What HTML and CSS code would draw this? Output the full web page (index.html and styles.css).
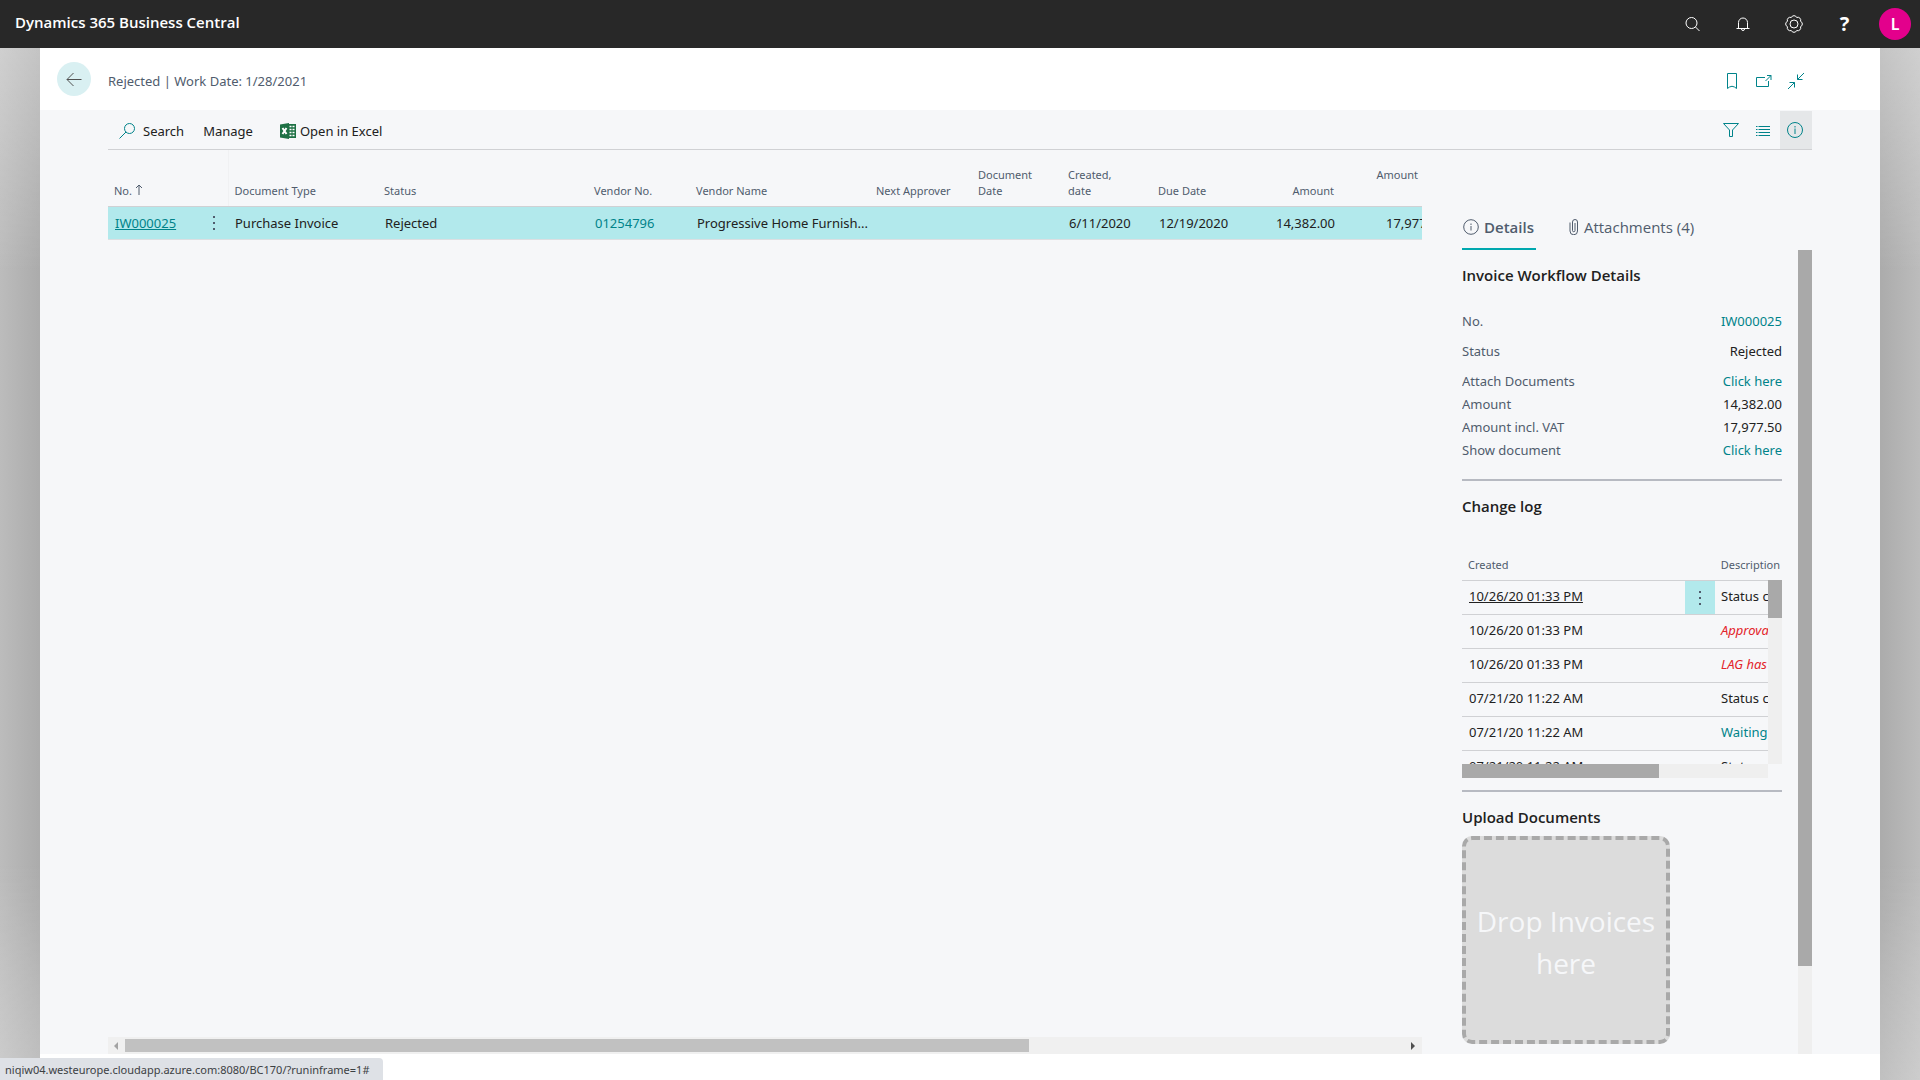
FILE: index.html
```html
<!DOCTYPE html>
<html lang="en">
<head>
  <meta charset="UTF-8">
  <meta name="viewport" content="width=device-width, initial-scale=1.0">
  <title>Rejected - Dynamics 365 Business Central</title>
  <link rel="stylesheet" href="styles.css">
</head>
<body>

  <!-- Top bar -->
  <header class="topbar">
    <a href="#" class="brand">Dynamics 365 Business Central</a>
    <nav class="topbar-icons">
      <button type="button" aria-label="Search">
        <svg width="16" height="16" viewBox="0 0 16 16"><circle cx="7.500" cy="7" r="5.500"/><path d="M11.500 11L15.500 15"/></svg>
      </button>
      <button type="button" aria-label="Notifications">
        <svg width="16" height="16" viewBox="0 0 16 16"><path d="M3.500 12.500V6.500a4.500 4.500 0 0 1 9 0V12.500M1.500 12.500H14.500M6.500 13a1.500 1.500 0 0 0 3 0"/></svg>
      </button>
      <button type="button" aria-label="Settings">
        <svg width="18" height="18" viewBox="0 0 18 18"><circle cx="9" cy="9" r="4"/><path d="M15.500 11.700A2.900 2.900 0 0 1 11.700 15.500A2.900 2.900 0 0 1 6.300 15.500A2.900 2.900 0 0 1 2.500 11.700A2.900 2.900 0 0 1 2.500 6.300A2.900 2.900 0 0 1 6.300 2.500A2.900 2.900 0 0 1 11.700 2.500A2.900 2.900 0 0 1 15.500 6.300A2.900 2.900 0 0 1 15.500 11.700Z"/></svg>
      </button>
      <button type="button" class="help" aria-label="Help">?</button>
      <button type="button" class="avatar">L</button>
    </nav>
  </header>

  <div class="page">

    <!-- Page title -->
    <div class="page-head">
      <button type="button" class="back" aria-label="Back">
        <svg width="16" height="16" viewBox="0 0 16 16"><path d="M15.500 8.500H1M7.500 2L1 8.500L7.500 15"/></svg>
      </button>
      <h1 class="page-title">Rejected | Work Date: 1/28/2021</h1>
      <div class="page-icons">
        <button type="button" aria-label="Bookmark">
          <svg width="18" height="18" viewBox="0 0 18 18"><path d="M4.500 1.500H13.500V16.500L11.500 15Q9 13.500 6.500 15L4.500 16.500Z"/></svg>
        </button>
        <button type="button" aria-label="Open in new window">
          <svg width="18" height="18" viewBox="0 0 18 18"><path d="M10 5.500H1.500V14.500H13.500V9M10.500 9L16 3.500M12 3.500H16V8"/></svg>
        </button>
        <button type="button" aria-label="Collapse">
          <svg width="18" height="18" viewBox="0 0 18 18"><path d="M17 1L10.500 7.500M10.500 2.500V7.500H15.500M1 17L7.500 10.500M2.500 10.500H7.500V15.500"/></svg>
        </button>
      </div>
    </div>

    <div class="content">

      <!-- Action bar -->
      <div class="toolbar">
        <button type="button" class="action action-search">
          <svg width="18" height="18" viewBox="0 0 18 18"><circle cx="11.500" cy="6.500" r="5"/><path d="M8 10L1.500 16.500"/></svg>
          Search
        </button>
        <button type="button" class="action action-manage">Manage</button>
        <button type="button" class="action action-excel">
          <svg class="excel" width="16" height="16" viewBox="0 0 16 16">
            <path d="M0 1.500L9 0V16L0 14.500Z"/>
            <path d="M9 1H16V15H9Z"/>
            <path class="cells" d="M9.500 3.500h2M12.500 3.500h2M9.500 6.500h2M12.500 6.500h2M9.500 9.500h2M12.500 9.500h2M9.500 12.500h2M12.500 12.500h2"/>
            <path class="cross" d="M2.500 5L6.500 11M6.500 5L2.500 11"/>
          </svg>
          Open in Excel
        </button>
        <div class="view-icons">
          <button type="button" aria-label="Filter">
            <svg width="18" height="18" viewBox="0 0 18 18"><path d="M1.500 2.500H16.500L10.500 9V15.500H7.500V9Z"/></svg>
          </button>
          <button type="button" aria-label="List">
            <svg width="18" height="18" viewBox="0 0 18 18"><path d="M2 5.500h1.500M4.500 5.500H16M2 8.500h1.500M4.500 8.500H16M2 11.500h1.500M4.500 11.500H16M2 14.500h1.500M4.500 14.500H16"/></svg>
          </button>
          <button type="button" class="on" aria-label="Details">
            <svg width="18" height="18" viewBox="0 0 18 18"><circle cx="9" cy="9" r="7.500"/><path d="M9 7.500V13M9 5V6.500"/></svg>
          </button>
        </div>
      </div>

      <div class="columns">

        <!-- Invoice list -->
        <section class="list">
          <div class="list-body">
            <table class="grid">
              <colgroup>
                <col class="c-no"><col class="c-type"><col class="c-status"><col class="c-vno"><col class="c-vname">
                <col class="c-next"><col class="c-date"><col class="c-date"><col class="c-date"><col class="c-amt"><col class="c-vat">
              </colgroup>
              <thead>
                <tr>
                  <th>No. <svg width="8" height="11" viewBox="0 0 8 11"><path d="M4 11V1M1 4L4 1L7 4"/></svg></th>
                  <th>Document Type</th>
                  <th>Status</th>
                  <th>Vendor No.</th>
                  <th>Vendor Name</th>
                  <th>Next Approver</th>
                  <th>Document<br>Date</th>
                  <th>Created,<br>date</th>
                  <th>Due Date</th>
                  <th class="num">Amount</th>
                  <th class="num num-last">Amount<br>&nbsp;</th>
                </tr>
              </thead>
              <tbody>
                <tr>
                  <td>
                    <div class="no-cell">
                      <a href="#" class="current">IW000025</a>
                      <button type="button" class="dots" aria-label="Show more options"><i></i><i></i><i></i></button>
                    </div>
                  </td>
                  <td>Purchase Invoice</td>
                  <td>Rejected</td>
                  <td><a href="#">01254796</a></td>
                  <td>Progressive Home Furnish...</td>
                  <td></td>
                  <td></td>
                  <td>6/11/2020</td>
                  <td>12/19/2020</td>
                  <td class="num">14,382.00</td>
                  <td class="num">17,977.50</td>
                </tr>
              </tbody>
            </table>
          </div>
          <div class="hscroll">
            <span class="arrow arrow-left"></span>
            <div class="hscroll-track"><div class="hscroll-thumb"></div></div>
            <span class="arrow arrow-right"></span>
          </div>
        </section>

        <!-- FactBox pane -->
        <aside class="factbox">
          <div class="tabs">
            <button type="button" class="tab active">
              <svg width="16" height="16" viewBox="0 0 16 16"><circle cx="8" cy="8" r="7.300"/><path d="M8 7V11.500M8 4.500V6"/></svg>
              Details
            </button>
            <button type="button" class="tab">
              <svg width="10" height="16" viewBox="0 0 10 16"><path d="M1 3.500V12a3.500 3.500 0 0 0 7.500 0V3a2.500 2.500 0 0 0-5 0V11.500a1.200 1.200 0 0 0 2.500 0V4"/></svg>
              Attachments (4)
            </button>
          </div>

          <div class="pane">
            <div class="pane-body">
              <section class="part">
                <h2>Invoice Workflow Details</h2>
                <dl class="fields">
                  <div class="tall"><dt>No.</dt><dd><a href="#">IW000025</a></dd></div>
                  <div class="tall"><dt>Status</dt><dd>Rejected</dd></div>
                  <div><dt>Attach Documents</dt><dd><a href="#">Click here</a></dd></div>
                  <div><dt>Amount</dt><dd>14,382.00</dd></div>
                  <div><dt>Amount incl. VAT</dt><dd>17,977.50</dd></div>
                  <div><dt>Show document</dt><dd><a href="#">Click here</a></dd></div>
                </dl>
              </section>

              <section class="part">
                <h2>Change log</h2>
                <div class="log-head"><span>Created</span><span>Description</span></div>
                <div class="log">
                  <div class="log-view">
                    <table class="log-table">
                      <tbody>
                        <tr>
                          <td><a href="#" class="current">10/26/20 01:33 PM</a></td>
                          <td class="menu"><button type="button" class="dots" aria-label="Show more options"><i></i><i></i><i></i></button></td>
                          <td>Status changed</td>
                        </tr>
                        <tr><td>10/26/20 01:33 PM</td><td></td><td class="bad">Approval rejected</td></tr>
                        <tr><td>10/26/20 01:33 PM</td><td></td><td class="bad">LAG has rejected</td></tr>
                        <tr><td>07/21/20 11:22 AM</td><td></td><td>Status changed</td></tr>
                        <tr><td>07/21/20 11:22 AM</td><td></td><td><a href="#">Waiting</a></td></tr>
                        <tr><td>07/21/20 11:22 AM</td><td></td><td>Status changed</td></tr>
                      </tbody>
                    </table>
                  </div>
                  <div class="log-v"><div></div></div>
                  <div class="log-h"><div></div></div>
                </div>
              </section>

              <section class="part">
                <h2>Upload Documents</h2>
                <button type="button" class="drop">Drop Invoices here</button>
              </section>
            </div>
            <div class="pane-scroll"><div></div></div>
          </div>
        </aside>

      </div>
    </div>
  </div>

  <!-- Link preview -->
  <div class="status-url">niqiw04.westeurope.cloudapp.azure.com:8080/BC170/?runinframe=1#</div>

</body>
</html>
```
FILE: styles.css
```css
* {
  margin: 0;
  padding: 0;
  box-sizing: border-box;
}

body {
  font-family: 'Noto Sans', 'Open Sans', sans-serif;
  font-size: 13px;
  line-height: 18px;
  color: #212121;
  background:
    linear-gradient(to bottom, rgba(255, 255, 255, 0.3) 4%, transparent 25%, transparent 80%, rgba(255, 255, 255, 0.25)),
    linear-gradient(to right, #bcbcbc, #acacac 2%, #acacac 98%, #bcbcbc);
  display: flex;
  flex-direction: column;
  height: 100vh;
  overflow: hidden;
}

button {
  font: inherit;
  color: inherit;
  background: none;
  border: none;
  cursor: pointer;
}

a {
  color: #00838a;
  text-decoration: none;
}

svg {
  display: block;
  flex: none;
  fill: none;
  stroke: currentColor;
}

/* Top bar */
.topbar {
  display: flex;
  align-items: center;
  justify-content: space-between;
  flex: none;
  height: 48px;
  padding: 0 9px 0 15px;
  background: #282828;
  color: #fff;
}

.brand,
.tab,
.part h2,
.drop {
  font-family: 'Open Sans', 'Noto Sans', sans-serif;
}

.brand {
  color: #fff;
  font-size: 15px;
  font-weight: 600;
  padding-bottom: 4px;
}

.topbar-icons {
  display: flex;
  align-items: center;
}

.topbar-icons button {
  display: flex;
  align-items: center;
  justify-content: center;
  width: 51px;
  height: 48px;
}

.topbar-icons .help {
  font-size: 20px;
  font-weight: 700;
}

.topbar-icons .avatar {
  width: 32px;
  height: 32px;
  margin-left: 9px;
  border-radius: 50%;
  background: #e3008c;
  font-size: 16px;
  font-weight: 600;
}

/* Page */
.page {
  flex: 1;
  display: flex;
  flex-direction: column;
  min-height: 0;
  margin: 0 40px;
  padding-bottom: 26px;
  background: #fff;
}

.page-head {
  display: flex;
  align-items: center;
  flex: none;
  height: 62px;
  padding: 0 68px 0 17px;
}

.back {
  display: flex;
  align-items: center;
  justify-content: center;
  width: 34px;
  height: 34px;
  margin-right: 17px;
  border-radius: 50%;
  background: #d9f0f2;
  color: #505050;
}

.page-title {
  flex: 1;
  padding-top: 3px;
  font-size: 13px;
  font-weight: 400;
  color: #505c6d;
}

.page-icons,
.view-icons {
  display: flex;
  color: #00838a;
}

.page-icons {
  padding-top: 4px;
}

.page-icons button,
.view-icons button {
  display: flex;
  align-items: center;
  justify-content: center;
  width: 32px;
  height: 38px;
}

.content {
  flex: 1;
  display: flex;
  flex-direction: column;
  min-height: 0;
  padding: 0 68px;
  background: #f6f7f9;
}

/* Action bar */
.toolbar {
  display: flex;
  align-items: flex-end;
  flex: none;
  height: 40px;
  border-bottom: 1px solid #d0d1d4;
}

.action {
  display: flex;
  align-items: center;
  height: 36px;
}

.action-search {
  gap: 7px;
  padding-left: 10px;
}

.action-search svg {
  color: #00838a;
}

.action-manage {
  margin-left: 19px;
}

.action-excel {
  gap: 4px;
  margin-left: 27px;
}

.excel {
  fill: #1e7145;
  stroke: none;
}

.excel .cells {
  stroke: #fff;
  stroke-width: 1.500;
}

.excel .cross {
  stroke: #fff;
  stroke-width: 2;
}

.view-icons {
  margin-left: auto;
}

.view-icons button {
  padding-right: 2px;
}

.view-icons .on {
  background: #e5e7e9;
}

/* List */
.columns {
  flex: 1;
  display: flex;
  gap: 40px;
  min-height: 0;
}

.list {
  flex: 1;
  display: flex;
  flex-direction: column;
  min-width: 0;
}

.list-body {
  flex: 1;
  overflow: hidden;
}

.grid {
  width: 1344px;
  table-layout: fixed;
  border-collapse: collapse;
}

.c-no { width: 120px; }
.c-type { width: 150px; }
.c-status { width: 210px; }
.c-vno { width: 102px; }
.c-vname { width: 180px; }
.c-next { width: 102px; }
.c-date { width: 90px; }
.c-amt { width: 100px; }
.c-vat { width: 110px; }

.grid th {
  height: 56px;
  padding: 0 6px 7px;
  font-size: 11px;
  font-weight: 400;
  line-height: 16px;
  text-align: left;
  vertical-align: bottom;
  color: #505c6d;
  border-bottom: 1px solid #d0d1d4;
}

.grid th:first-child {
  border-right: 1px solid #f0f1f3;
}

.grid th svg {
  display: inline-block;
}

.grid td {
  height: 33px;
  padding: 0 7px;
  white-space: nowrap;
  background: #b2e9ec;
  border-bottom: 1px solid #dcdfe2;
}

.grid .num {
  text-align: right;
}

.grid th.num {
  padding-right: 8px;
}

.grid th.num-last {
  padding-right: 34px;
}

.no-cell {
  display: flex;
  align-items: center;
  justify-content: space-between;
}

.current {
  text-decoration: underline;
}

.dots {
  display: flex;
  flex-direction: column;
  align-items: center;
  gap: 4px;
  width: 14px;
}

.dots i {
  width: 2px;
  height: 2px;
  background: #505c6d;
}

.hscroll {
  display: flex;
  align-items: center;
  flex: none;
  height: 17px;
  background: #f0f0f0;
}

.hscroll-track {
  flex: 1;
}

.hscroll-thumb {
  width: 70.6%;
  height: 13px;
  background: #c1c1c1;
}

.arrow {
  width: 17px;
  border: 4px solid transparent;
}

.arrow::before {
  content: '';
  display: block;
  width: 0;
  margin-left: 2px;
  border: 4px solid transparent;
}

.arrow-left::before {
  border-left-width: 0;
  border-right-color: #a3a3a3;
}

.arrow-right::before {
  border-right-width: 0;
  border-left-color: #505050;
}

/* FactBox pane */
.factbox {
  flex: none;
  display: flex;
  flex-direction: column;
  width: 350px;
}

.tabs {
  display: flex;
  gap: 32px;
  flex: none;
  padding-top: 52px;
}

.tab {
  display: flex;
  align-items: center;
  gap: 5px;
  height: 48px;
  padding: 4px 2px 0 1px;
  font-size: 15px;
  color: #505c6d;
  border-bottom: 2px solid transparent;
}

.tab.active {
  font-weight: 600;
  border-color: #00a8af;
}

.pane {
  flex: 1;
  display: flex;
  justify-content: space-between;
  min-height: 0;
}

.pane-body {
  width: 320px;
  overflow: hidden;
}

.pane-scroll {
  width: 14px;
  background: #efefef;
}

.pane-scroll div {
  height: 89%;
  background: #a9a9a9;
}

.part {
  padding: 13px 0 12px;
  border-bottom: 2px solid #b7bac2;
}

.part:last-child {
  padding-bottom: 0;
  border-bottom: none;
}

.part h2 {
  font-size: 15px;
  font-weight: 600;
  line-height: 24px;
}

.fields {
  padding: 23px 0 5px;
}

.fields div {
  display: flex;
  justify-content: space-between;
  line-height: 23px;
}

.fields .tall {
  padding-bottom: 7px;
}

.fields dt {
  color: #505c6d;
}

.log-head {
  display: flex;
  justify-content: space-between;
  padding: 38px 2px 6px 6px;
  font-size: 11px;
  color: #505c6d;
}

.log {
  display: grid;
  grid-template-columns: 1fr 14px;
  grid-template-rows: 184px 14px;
}

.log-view {
  overflow: hidden;
}

.log-table {
  width: 480px;
  table-layout: fixed;
  border-collapse: collapse;
}

.log-table td {
  height: 34px;
  padding: 0 7px 3px;
  border-top: 1px solid #d0d1d4;
  white-space: nowrap;
}

.log-table td:first-child {
  width: 223px;
}

.log-table td:nth-child(2) {
  width: 30px;
}

.log-table td:last-child {
  padding-left: 6px;
}

.log-table .menu {
  padding: 0 8px;
  background: #b2e9ec;
}

.log-table .current {
  color: #212121;
}

.log-table .bad {
  color: #e3242b;
  font-style: italic;
}

.log-v,
.log-h {
  background: #efefef;
}

.log-v div {
  height: 38px;
  background: #a9a9a9;
}

.log-h div {
  width: 197px;
  height: 14px;
  background: #a9a9a9;
}

.drop {
  display: block;
  width: 208px;
  height: 208px;
  margin-top: 7px;
  padding-top: 4px;
  background: #dcdcdc;
  border: 4px dashed #a9a9a9;
  border-radius: 10px;
  font-size: 28px;
  line-height: 42px;
  color: #f6f7f9;
}

/* Link preview */
.status-url {
  position: absolute;
  left: 0;
  bottom: 0;
  height: 22px;
  padding: 0 13px 0 5px;
  font-size: 11px;
  line-height: 23px;
  color: #3c4043;
  background: #dee1e6;
  border-top-right-radius: 4px;
}
```
